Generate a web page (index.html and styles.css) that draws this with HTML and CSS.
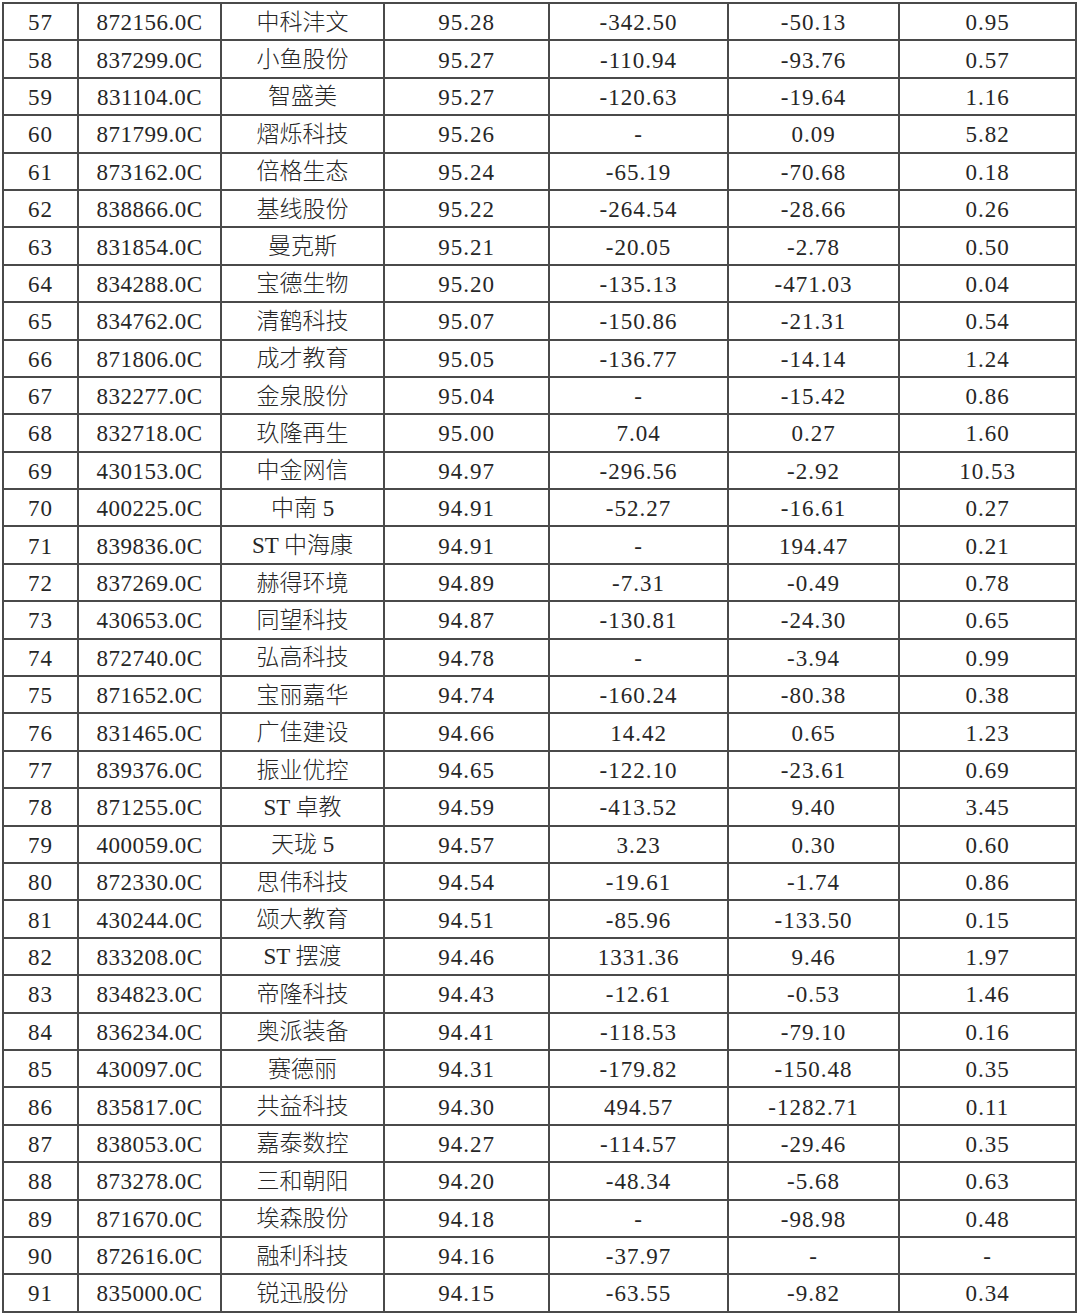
FILE: index.html
```html
<!DOCTYPE html>
<html lang="zh-CN">
<head>
<meta charset="utf-8">
<title>表格</title>
<link rel="stylesheet" href="styles.css">
</head>
<body>
<table class="grid">
<colgroup>
<col class="c-rank"><col class="c-code"><col class="c-name"><col class="c-score"><col class="c-a"><col class="c-b"><col class="c-c">
</colgroup>
<tbody>
<tr><td>57</td><td class="code">872156.0C</td><td class="name">中科沣文</td><td>95.28</td><td>-342.50</td><td>-50.13</td><td>0.95</td></tr>
<tr><td>58</td><td class="code">837299.0C</td><td class="name">小鱼股份</td><td>95.27</td><td>-110.94</td><td>-93.76</td><td>0.57</td></tr>
<tr><td>59</td><td class="code">831104.0C</td><td class="name">智盛美</td><td>95.27</td><td>-120.63</td><td>-19.64</td><td>1.16</td></tr>
<tr><td>60</td><td class="code">871799.0C</td><td class="name">熠烁科技</td><td>95.26</td><td>-</td><td>0.09</td><td>5.82</td></tr>
<tr><td>61</td><td class="code">873162.0C</td><td class="name">倍格生态</td><td>95.24</td><td>-65.19</td><td>-70.68</td><td>0.18</td></tr>
<tr><td>62</td><td class="code">838866.0C</td><td class="name">基线股份</td><td>95.22</td><td>-264.54</td><td>-28.66</td><td>0.26</td></tr>
<tr><td>63</td><td class="code">831854.0C</td><td class="name">曼克斯</td><td>95.21</td><td>-20.05</td><td>-2.78</td><td>0.50</td></tr>
<tr><td>64</td><td class="code">834288.0C</td><td class="name">宝德生物</td><td>95.20</td><td>-135.13</td><td>-471.03</td><td>0.04</td></tr>
<tr><td>65</td><td class="code">834762.0C</td><td class="name">清鹤科技</td><td>95.07</td><td>-150.86</td><td>-21.31</td><td>0.54</td></tr>
<tr><td>66</td><td class="code">871806.0C</td><td class="name">成才教育</td><td>95.05</td><td>-136.77</td><td>-14.14</td><td>1.24</td></tr>
<tr><td>67</td><td class="code">832277.0C</td><td class="name">金泉股份</td><td>95.04</td><td>-</td><td>-15.42</td><td>0.86</td></tr>
<tr><td>68</td><td class="code">832718.0C</td><td class="name">玖隆再生</td><td>95.00</td><td>7.04</td><td>0.27</td><td>1.60</td></tr>
<tr><td>69</td><td class="code">430153.0C</td><td class="name">中金网信</td><td>94.97</td><td>-296.56</td><td>-2.92</td><td>10.53</td></tr>
<tr><td>70</td><td class="code">400225.0C</td><td class="name">中南 5</td><td>94.91</td><td>-52.27</td><td>-16.61</td><td>0.27</td></tr>
<tr><td>71</td><td class="code">839836.0C</td><td class="name">ST 中海康</td><td>94.91</td><td>-</td><td>194.47</td><td>0.21</td></tr>
<tr><td>72</td><td class="code">837269.0C</td><td class="name">赫得环境</td><td>94.89</td><td>-7.31</td><td>-0.49</td><td>0.78</td></tr>
<tr><td>73</td><td class="code">430653.0C</td><td class="name">同望科技</td><td>94.87</td><td>-130.81</td><td>-24.30</td><td>0.65</td></tr>
<tr><td>74</td><td class="code">872740.0C</td><td class="name">弘高科技</td><td>94.78</td><td>-</td><td>-3.94</td><td>0.99</td></tr>
<tr><td>75</td><td class="code">871652.0C</td><td class="name">宝丽嘉华</td><td>94.74</td><td>-160.24</td><td>-80.38</td><td>0.38</td></tr>
<tr><td>76</td><td class="code">831465.0C</td><td class="name">广佳建设</td><td>94.66</td><td>14.42</td><td>0.65</td><td>1.23</td></tr>
<tr><td>77</td><td class="code">839376.0C</td><td class="name">振业优控</td><td>94.65</td><td>-122.10</td><td>-23.61</td><td>0.69</td></tr>
<tr><td>78</td><td class="code">871255.0C</td><td class="name">ST 卓教</td><td>94.59</td><td>-413.52</td><td>9.40</td><td>3.45</td></tr>
<tr><td>79</td><td class="code">400059.0C</td><td class="name">天珑 5</td><td>94.57</td><td>3.23</td><td>0.30</td><td>0.60</td></tr>
<tr><td>80</td><td class="code">872330.0C</td><td class="name">思伟科技</td><td>94.54</td><td>-19.61</td><td>-1.74</td><td>0.86</td></tr>
<tr><td>81</td><td class="code">430244.0C</td><td class="name">颂大教育</td><td>94.51</td><td>-85.96</td><td>-133.50</td><td>0.15</td></tr>
<tr><td>82</td><td class="code">833208.0C</td><td class="name">ST 摆渡</td><td>94.46</td><td>1331.36</td><td>9.46</td><td>1.97</td></tr>
<tr><td>83</td><td class="code">834823.0C</td><td class="name">帝隆科技</td><td>94.43</td><td>-12.61</td><td>-0.53</td><td>1.46</td></tr>
<tr><td>84</td><td class="code">836234.0C</td><td class="name">奥派装备</td><td>94.41</td><td>-118.53</td><td>-79.10</td><td>0.16</td></tr>
<tr><td>85</td><td class="code">430097.0C</td><td class="name">赛德丽</td><td>94.31</td><td>-179.82</td><td>-150.48</td><td>0.35</td></tr>
<tr><td>86</td><td class="code">835817.0C</td><td class="name">共益科技</td><td>94.30</td><td>494.57</td><td>-1282.71</td><td>0.11</td></tr>
<tr><td>87</td><td class="code">838053.0C</td><td class="name">嘉泰数控</td><td>94.27</td><td>-114.57</td><td>-29.46</td><td>0.35</td></tr>
<tr><td>88</td><td class="code">873278.0C</td><td class="name">三和朝阳</td><td>94.20</td><td>-48.34</td><td>-5.68</td><td>0.63</td></tr>
<tr><td>89</td><td class="code">871670.0C</td><td class="name">埃森股份</td><td>94.18</td><td>-</td><td>-98.98</td><td>0.48</td></tr>
<tr><td>90</td><td class="code">872616.0C</td><td class="name">融利科技</td><td>94.16</td><td>-37.97</td><td>-</td><td>-</td></tr>
<tr><td>91</td><td class="code">835000.0C</td><td class="name">锐迅股份</td><td>94.15</td><td>-63.55</td><td>-9.82</td><td>0.34</td></tr>
</tbody>
</table>
</body>
</html>
```

FILE: styles.css
```css
html, body {
  margin: 0;
  padding: 0;
  background: #ffffff;
}

.grid {
  border-collapse: collapse;
  table-layout: fixed;
  margin: 2px 0 0 2px;
  color: #262626;
  font-family: "Liberation Serif", "Noto Sans CJK SC", serif;
  font-size: 23px;
  letter-spacing: 1px;
}

.c-rank { width: 75px; }
.c-code { width: 143px; }
.c-name { width: 163px; }
.c-score { width: 165px; }
.c-a { width: 179px; }
.c-b { width: 171px; }
.c-c { width: 177px; }

.grid tr {
  height: 37.4px;
}

.grid td {
  border: 2px solid #4a4a4a;
  padding: 2px 0 0;
  text-align: center;
  vertical-align: middle;
  line-height: 1;
  white-space: nowrap;
}

.grid td.code {
  letter-spacing: 0.5px;
}

.grid td.name {
  font-weight: 300;
  letter-spacing: 0;
  padding-top: 1px;
}
```
